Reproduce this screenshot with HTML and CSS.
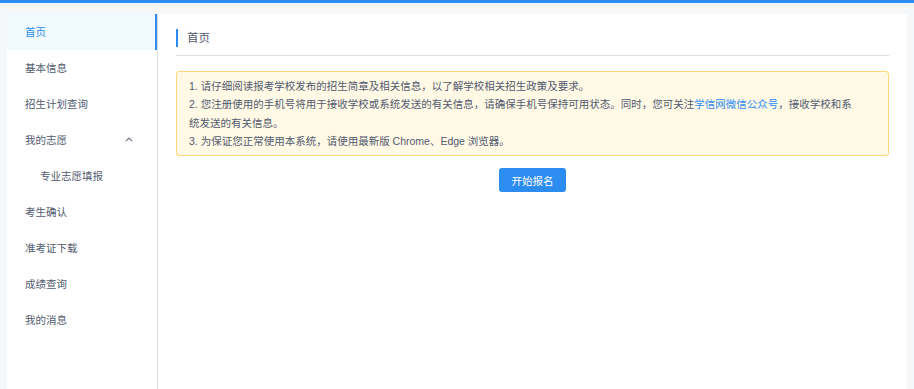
FILE: index.html
```html
<!DOCTYPE html>
<html lang="zh-CN">
<head>
  <meta charset="UTF-8" />
  <meta name="viewport" content="width=device-width, initial-scale=1.0"/>
  <title>首页</title>
  <link rel="stylesheet" href="styles.css">
</head>
<body>

  <div class="top-bar"></div>

  <div class="page">
    <div class="panel">
      <ul class="side-menu">
        <li class="menu-item active">首页</li>
        <li class="menu-item">基本信息</li>
        <li class="menu-item">招生计划查询</li>
        <li class="menu-item submenu-title">
          <span>我的志愿</span>
          <svg class="arrow" width="8" height="5" viewBox="0 0 8 5"><path d="M0.8 4.2 L4 1 L7.2 4.2" fill="none" stroke="#6b7385" stroke-width="1.1"/></svg>
        </li>
        <li class="menu-item sub-item">专业志愿填报</li>
        <li class="menu-item">考生确认</li>
        <li class="menu-item">准考证下载</li>
        <li class="menu-item">成绩查询</li>
        <li class="menu-item">我的消息</li>
      </ul>

      <div class="main">
        <div class="page-title">首页</div>

        <div class="notice">
          <p>1. 请仔细阅读报考学校发布的招生简章及相关信息，以了解学校相关招生政策及要求。</p>
          <p>2. 您注册使用的手机号将用于接收学校或系统发送的有关信息，请确保手机号保持可用状态。同时，您可关注<a href="#">学信网微信公众号</a>，接收学校和系统发送的有关信息。</p>
          <p>3. 为保证您正常使用本系统，请使用最新版 Chrome、Edge 浏览器。</p>
        </div>

        <div class="actions">
          <button type="button" class="btn-primary">开始报名</button>
        </div>
      </div>
    </div>
  </div>

</body>
</html>
```

FILE: styles.css
```css
:root {
  --primary: #2d8cf0;
  --text: #515a6e;
  --border: #dcdee2;
  --bg: #f5f7f9;
}

* {
  box-sizing: border-box;
}

html, body {
  height: 100%;
}

body {
  margin: 0;
  background: var(--bg);
  color: var(--text);
  font-family: "Liberation Sans", "Noto Sans CJK SC", sans-serif;
  font-size: 10.5px;
  overflow: hidden;
}

.top-bar {
  height: 3px;
  background: var(--primary);
}

.page {
  padding: 11px 7px 0 7px;
}

.panel {
  display: flex;
  background: #fff;
  height: calc(100vh - 14px);
}

.side-menu {
  list-style: none;
  margin: 0;
  padding: 0;
  width: 151px;
  flex-shrink: 0;
  border-right: 1px solid var(--border);
}

.menu-item {
  height: 36px;
  line-height: 36px;
  padding: 0 18px;
  color: var(--text);
  cursor: pointer;
}

.menu-item.active {
  background: #f0faff;
  color: var(--primary);
  box-shadow: inset -2px 0 0 var(--primary);
}

.submenu-title {
  display: flex;
  align-items: center;
  justify-content: space-between;
  padding-right: 24px;
}

.arrow {
  display: block;
  margin-top: -1px;
}

.sub-item {
  padding-left: 33px;
}

.main {
  flex: 1;
  padding: 15px 18px 0 18px;
}

.page-title {
  height: 18px;
  line-height: 18px;
  border-left: 2px solid var(--primary);
  padding-left: 9px;
  font-size: 11.5px;
  color: #515a6e;
  margin-bottom: 8px;
}

.page-title::after {
  content: "";
  display: block;
  height: 1px;
  background: var(--border);
  margin-left: -11px;
  margin-top: 8px;
}

.notice {
  margin-top: 24px;
  background: #fff9e6;
  border: 1px solid #ffd77a;
  border-radius: 3px;
  padding: 4.5px 30px 4.5px 12px;
  line-height: 18.5px;
}

.notice p {
  margin: 0;
}

.notice a {
  color: var(--primary);
  text-decoration: none;
}

.actions {
  text-align: center;
  margin-top: 12px;
}

.btn-primary {
  width: 67px;
  height: 24px;
  padding: 0;
  border: none;
  border-radius: 3px;
  background: var(--primary);
  color: #fff;
  font-family: inherit;
  font-size: 10.5px;
  cursor: pointer;
}
```
